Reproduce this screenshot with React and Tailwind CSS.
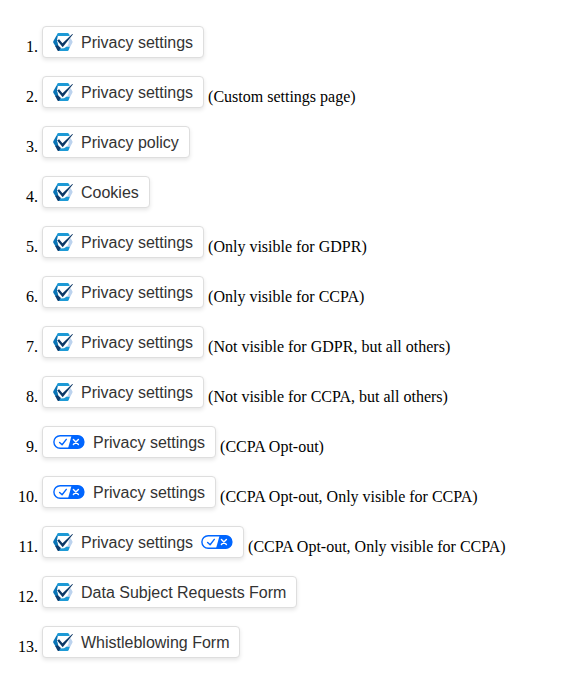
function LogoIcon() {
  return (
    <svg width="20" height="20" viewBox="0 0 20 20" fill="none" className="shrink-0">
      <path d="M5.2 1H14.6Q15.4 1 16 2L17 4H4.6L2.8 5L4.2 1.9Q4.6 1 5.2 1Z" fill="#1d9ad6" />
      <path d="M3.2 4H4.8L4 8L5.4 14L2.9 15L0.3 10.8Q0 10 0.3 9.2Z" fill="#0a74b6" />
      <path d="M2.2 14L4.8 13.2L8 16L6.6 19H5.4Q4.6 19 4.2 18Z" fill="#0c3c6e" />
      <path d="M7.4 16.4L11 16.2L14.6 14H17.2L15.8 17.8Q15.4 19 14.4 19H6Z" fill="#1d9ad6" />
      <path d="M17.2 5.6L19.4 9.2Q19.8 10 19.4 10.8L17.2 14.8L13.8 15L15.6 11.8V7.6Z" fill="#bcd3ee" />
      <path d="M5 8.6L9.6 13.4L17.8 4" stroke="#fff" strokeWidth="2.4" />
      <path d="M4.2 8.5L6.1 7.3L9.5 11.3L19.3 2L20 2.3L9.7 15.2Z" fill="#0b3765" />
    </svg>
  );
}

function OptOutIcon() {
  return (
    <svg width="32" height="14" viewBox="0 0 32 14" fill="none" className="shrink-0">
      <rect x="0.9" y="0.7" width="30" height="12.6" rx="6.3" fill="#fff" stroke="#0066ff" strokeWidth="1.4" />
      <path d="M18.6 0.5H24.5C28.2 0.5 31 3.4 31 7S28.2 13.5 24.5 13.5H15Z" fill="#0066ff" />
      <path d="M6.6 7.4L9.1 9.8L13.3 4.4" stroke="#0066ff" strokeWidth="1.4" strokeLinecap="round" strokeLinejoin="round" />
      <path d="M20.4 4.4L25.4 9.6M25.4 4.4L20.4 9.6" stroke="#fff" strokeWidth="1.4" strokeLinecap="round" />
    </svg>
  );
}

const items = [
  { label: "Privacy settings" },
  { label: "Privacy settings", note: "(Custom settings page)" },
  { label: "Privacy policy" },
  { label: "Cookies" },
  { label: "Privacy settings", note: "(Only visible for GDPR)" },
  { label: "Privacy settings", note: "(Only visible for CCPA)" },
  { label: "Privacy settings", note: "(Not visible for GDPR, but all others)" },
  { label: "Privacy settings", note: "(Not visible for CCPA, but all others)" },
  { label: "Privacy settings", icon: "optout", note: "(CCPA Opt-out)" },
  { label: "Privacy settings", icon: "optout", note: "(CCPA Opt-out, Only visible for CCPA)" },
  { label: "Privacy settings", trailing: true, note: "(CCPA Opt-out, Only visible for CCPA)" },
  { label: "Data Subject Requests Form" },
  { label: "Whistleblowing Form" },
];

function PrivacyButton({ label, icon, trailing }) {
  return (
    <button className="flex h-8 shrink-0 items-center gap-2 rounded border border-[#dedede] bg-white px-2.5 font-['Liberation_Sans',Arial,sans-serif] text-base text-[#333] shadow-[0_2px_4px_rgba(0,0,0,0.1)]">
      {icon === "optout" ? <OptOutIcon /> : <LogoIcon />}
      <span className="pt-0.5">{label}</span>
      {trailing && <OptOutIcon />}
    </button>
  );
}

export default function App() {
  return (
    <main className="min-h-screen bg-white pt-[26px] font-['Liberation_Serif','Times_New_Roman',serif] text-base leading-[18px] text-black">
      <ol>
        {items.map((item, i) => (
          <li key={i} className="flex h-[50px] items-start gap-1 whitespace-nowrap">
            <span className="w-[38px] pt-3 text-right">{i + 1}.</span>
            <PrivacyButton label={item.label} icon={item.icon} trailing={item.trailing} />
            {item.note && <span className="pt-3">{item.note}</span>}
          </li>
        ))}
      </ol>
    </main>
  );
}
